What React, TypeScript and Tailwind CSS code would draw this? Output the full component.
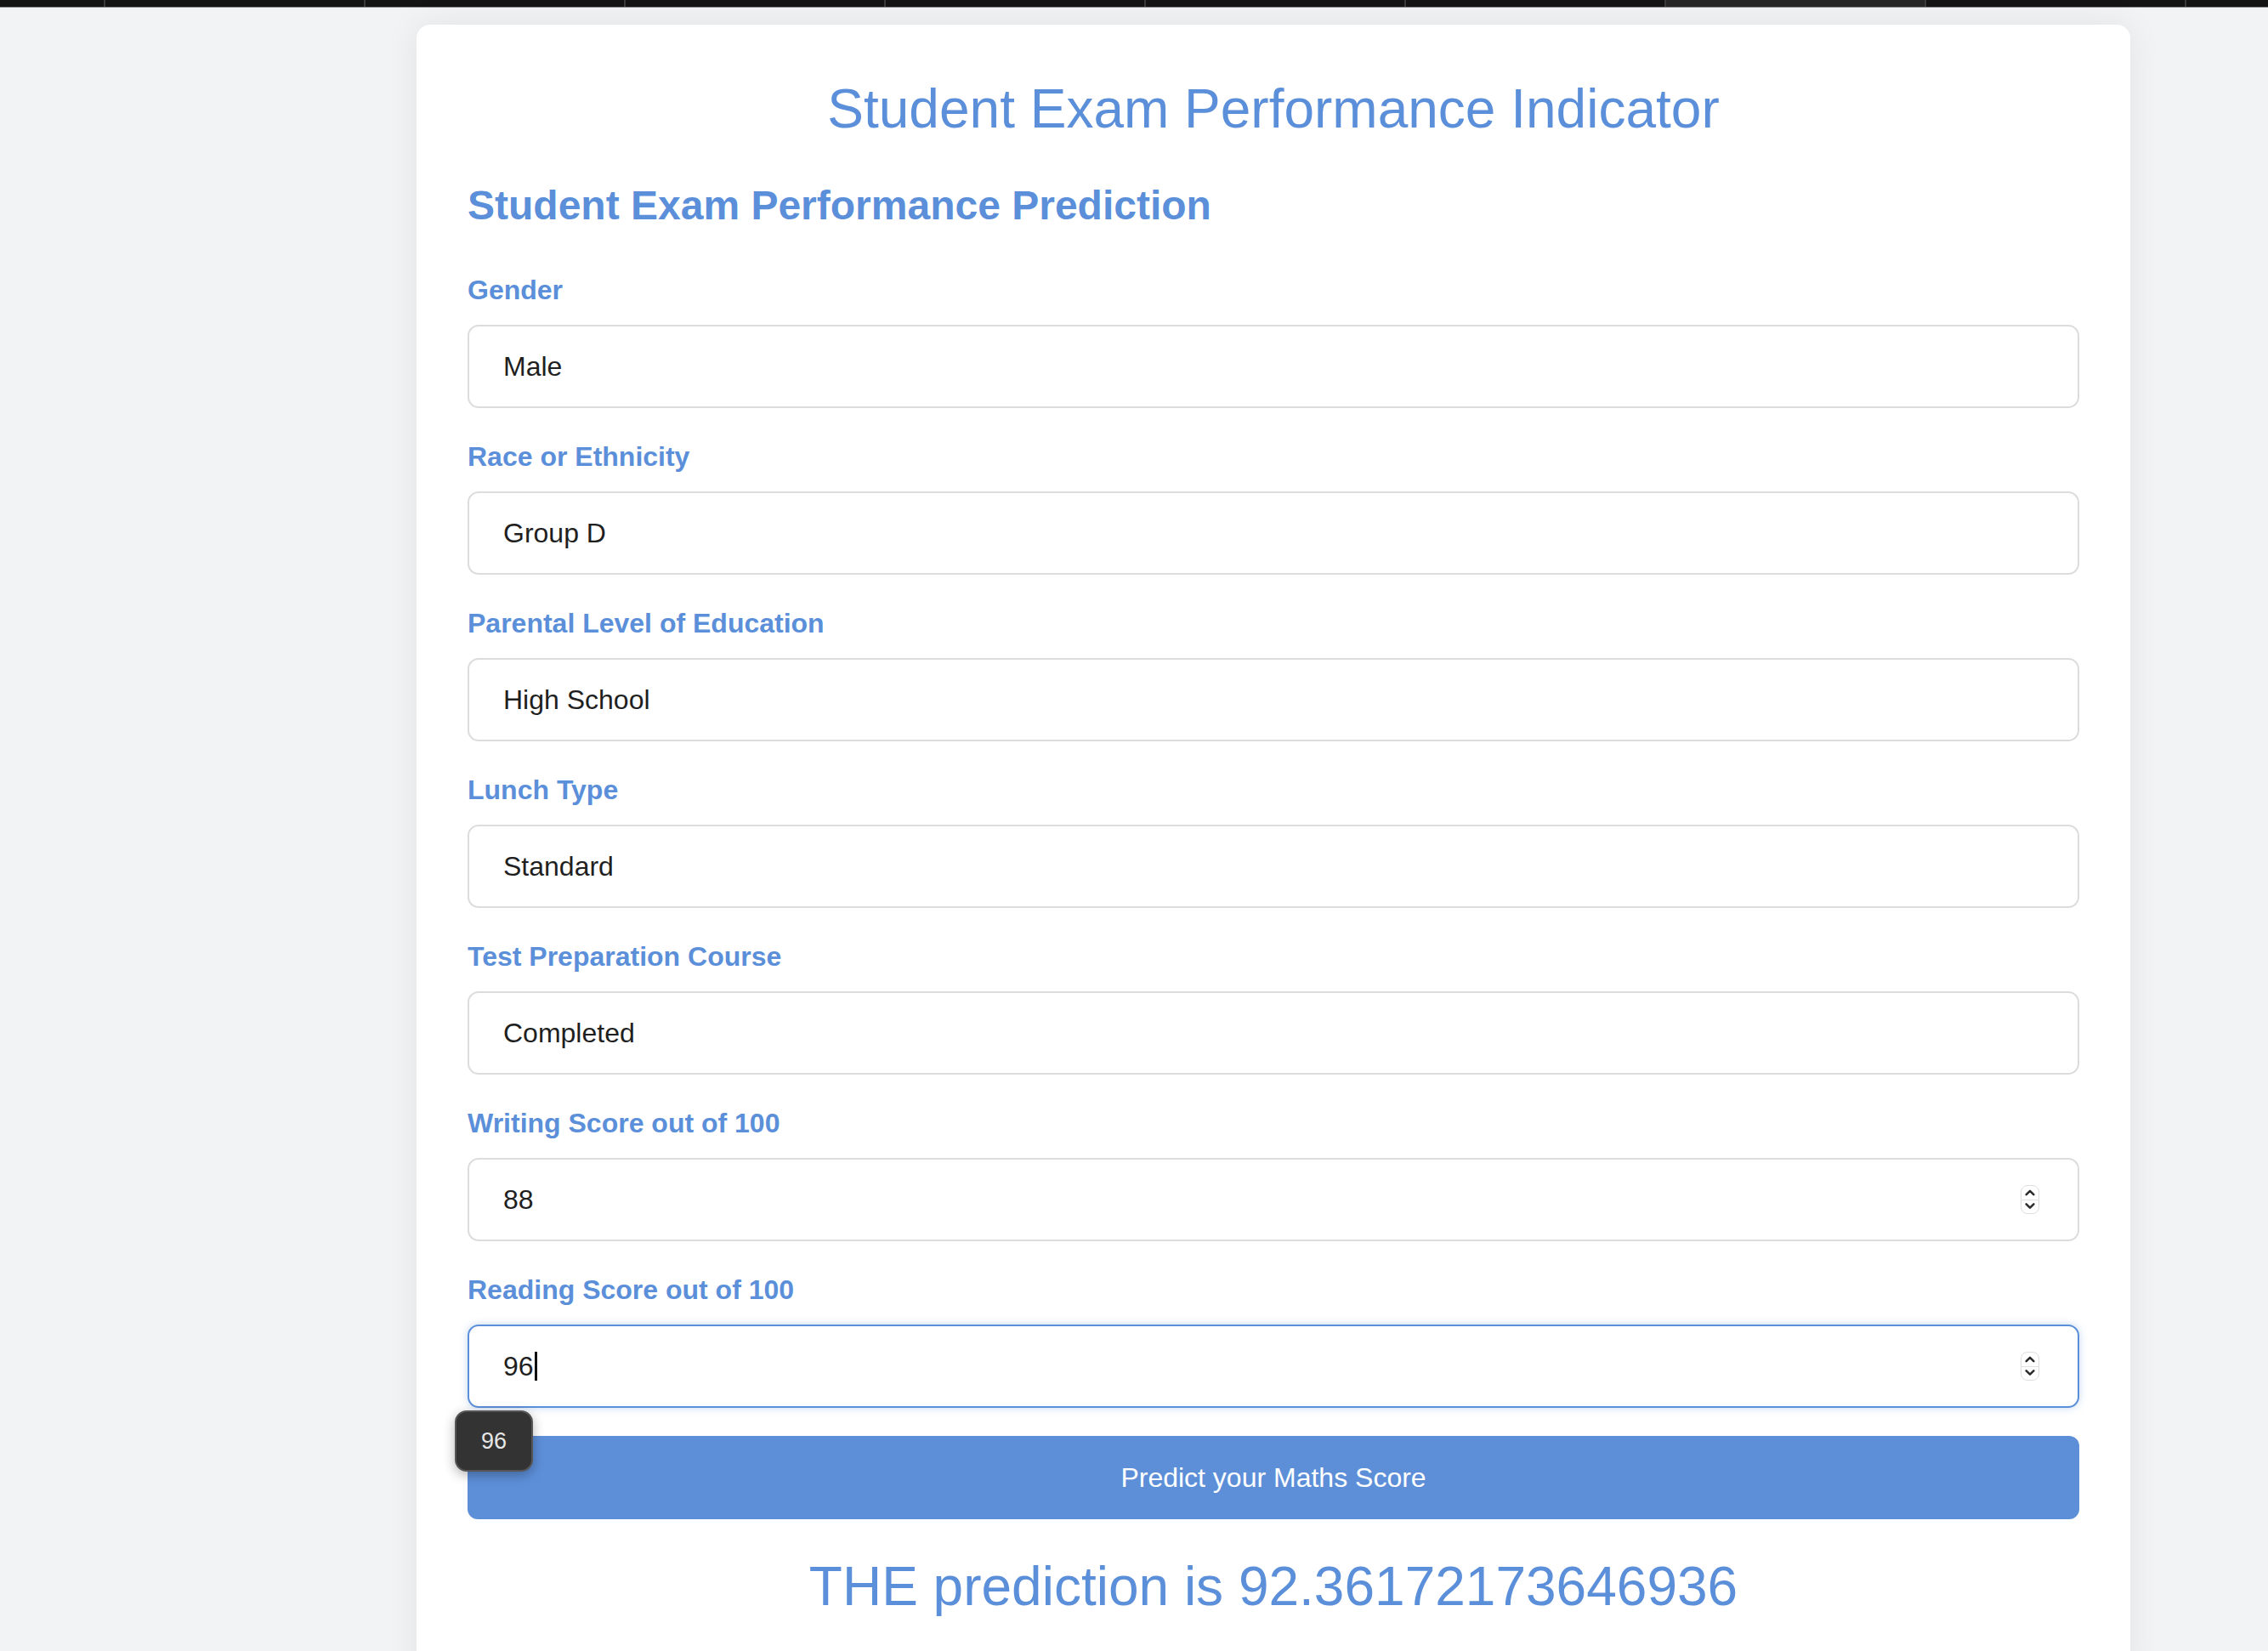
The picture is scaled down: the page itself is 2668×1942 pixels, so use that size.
import React from 'react';

const fields = [
  { label: 'Gender', value: 'Male' },
  { label: 'Race or Ethnicity', value: 'Group D' },
  { label: 'Parental Level of Education', value: 'High School' },
  { label: 'Lunch Type', value: 'Standard' },
  { label: 'Test Preparation Course', value: 'Completed' },
];

const Spinner: React.FC = () => (
  <div className="absolute right-[45px] top-1/2 -translate-y-1/2 w-[22px] h-[34px] rounded-[8px] border border-[#dedede] bg-white flex flex-col items-center">
    <svg width="22" height="16" viewBox="0 0 22 16" className="block">
      <path d="M6.5 10.5 L11 6 L15.5 10.5" fill="none" stroke="#2b2b2b" strokeWidth="2.6" strokeLinecap="round" strokeLinejoin="round" />
    </svg>
    <div className="w-full h-px bg-[#e2e2e2]" />
    <svg width="22" height="16" viewBox="0 0 22 16" className="block">
      <path d="M6.5 5.5 L11 10 L15.5 5.5" fill="none" stroke="#2b2b2b" strokeWidth="2.6" strokeLinecap="round" strokeLinejoin="round" />
    </svg>
  </div>
);

const App: React.FC = () => {
  const tabs = [0, 1, 2, 3, 4, 5, 6, 7];

  return (
    <div className="min-h-screen bg-[#f2f3f5] font-['Liberation_Sans',Arial,sans-serif] overflow-hidden">
      {/* Browser tab strip */}
      <div className="flex h-[9px] bg-[#141414] border-b border-[#8c8c8c]">
        <div className="w-[122px]" />
        {tabs.map((t) => (
          <div
            key={t}
            className={
              t === 6
                ? 'w-[306px] border-l-2 border-[#3a3a3a] bg-[#262626]'
                : 'w-[306px] border-l-2 border-[#3a3a3a]'
            }
          />
        ))}
        <div className="flex-1 border-l-2 border-[#3a3a3a]" />
      </div>

      <div className="pl-[490px] pt-[20px]">
        <div className="w-[2016px] bg-white rounded-[16px] shadow-[0_0_40px_rgba(0,0,0,0.07)] px-[60px] pt-[62px] pb-[80px]">
          <h1 className="text-center text-[64px] leading-[74px] font-normal text-[#5b8fd9]">
            Student Exam Performance Indicator
          </h1>

          <h2 className="mt-[49px] text-[48px] leading-[56px] font-bold text-[#5b8fd9]">
            Student Exam Performance Prediction
          </h2>

          <form className="mt-[53px] flex flex-col gap-[39px]" onSubmit={(e) => e.preventDefault()}>
            {fields.map((f) => (
              <div key={f.label}>
                <label className="block text-[32px] leading-[36px] font-bold text-[#5b8fd9] mb-[23px]">
                  {f.label}
                </label>
                <div className="h-[98px] rounded-[13px] border-2 border-[#dcdcdc] bg-white px-[40px] flex items-center text-[32px] text-[#1f1f1f]">
                  {f.value}
                </div>
              </div>
            ))}

            <div>
              <label className="block text-[32px] leading-[36px] font-bold text-[#5b8fd9] mb-[23px]">
                Writing Score out of 100
              </label>
              <div className="relative h-[98px] rounded-[13px] border-2 border-[#dcdcdc] bg-white px-[40px] flex items-center text-[32px] text-[#1f1f1f]">
                88
                <Spinner />
              </div>
            </div>

            <div>
              <label className="block text-[32px] leading-[36px] font-bold text-[#5b8fd9] mb-[23px]">
                Reading Score out of 100
              </label>
              <div className="relative h-[98px] rounded-[13px] border-2 border-[#5b8fd9] bg-white px-[40px] flex items-center text-[32px] text-[#1f1f1f] shadow-[0_0_10px_rgba(91,143,217,0.35)]">
                <span>96</span>
                <span className="inline-block w-[3px] h-[34px] bg-[#111] ml-[1px]" />
                <Spinner />
                {/* value tooltip */}
                <div className="absolute left-[-17px] top-[calc(100%+5px)] z-10 w-[92px] h-[72px] rounded-[14px] bg-[#333333] border-2 border-[#555555] shadow-[0_4px_14px_rgba(0,0,0,0.3)] flex items-center justify-center text-[27px] text-[#e6e6e6]">
                  96
                </div>
              </div>
            </div>
          </form>

          <button
            type="button"
            className="mt-[33px] w-full h-[98px] rounded-[12px] bg-[#5d8fd9] text-white text-[32px]"
          >
            Predict your Maths Score
          </button>

          <p className="mt-[42px] text-center text-[64px] leading-[74px] text-[#5b8fd9]">
            THE prediction is 92.36172173646936
          </p>
        </div>
      </div>
    </div>
  );
};

export default App;
